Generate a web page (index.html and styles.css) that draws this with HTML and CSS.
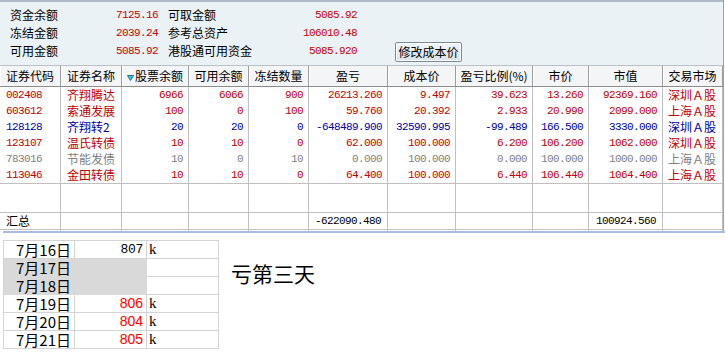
FILE: index.html
```html
<!DOCTYPE html>
<html lang="zh-CN">
<head>
<meta charset="utf-8">
<title>持仓</title>
<link rel="stylesheet" href="styles.css">
</head>
<body>
<div class="app">
  <div class="panel">
    <div class="summary">
      <span class="lbl">资金余额</span><span class="val">7125.16</span><span class="lbl2">可取金额</span><span class="val2">5085.92</span>
      <span class="lbl">冻结金额</span><span class="val">2039.24</span><span class="lbl2">参考总资产</span><span class="val2">106010.48</span>
      <span class="lbl">可用金额</span><span class="val">5085.92</span><span class="lbl2">港股通可用资金</span><span class="val2">5085.920</span><button class="btn">修改成本价</button>
    </div>
  </div>
  <div class="tbl">
    <div class="row head">
      <div class="c">证券代码</div>
      <div class="c">证券名称</div>
      <div class="c"><svg class="sort" width="7" height="6" viewBox="0 0 7 6"><polygon points="0.5,0.5 6.5,0.5 3.5,5.5" fill="#34C6DA" stroke="#167C8C" stroke-width="1"/></svg>股票余额</div>
      <div class="c">可用余额</div>
      <div class="c">冻结数量</div>
      <div class="c">盈亏</div>
      <div class="c">成本价</div>
      <div class="c">盈亏比例(%)</div>
      <div class="c">市价</div>
      <div class="c">市值</div>
      <div class="c">交易市场</div>
    </div>
    <div class="row data red">
      <div class="c n l">002408</div><div class="c t">齐翔腾达</div><div class="c n">6966</div><div class="c n">6066</div><div class="c n">900</div><div class="c n">26213.260</div><div class="c n">9.497</div><div class="c n">39.623</div><div class="c n">13.260</div><div class="c n">92369.160</div><div class="c t">深圳Ａ股</div>
    </div>
    <div class="row data red">
      <div class="c n l">603612</div><div class="c t">索通发展</div><div class="c n">100</div><div class="c n">0</div><div class="c n">100</div><div class="c n">59.760</div><div class="c n">20.392</div><div class="c n">2.933</div><div class="c n">20.990</div><div class="c n">2099.000</div><div class="c t">上海Ａ股</div>
    </div>
    <div class="row data blue">
      <div class="c n l">128128</div><div class="c t">齐翔转2</div><div class="c n">20</div><div class="c n">20</div><div class="c n">0</div><div class="c n">-648489.900</div><div class="c n">32590.995</div><div class="c n">-99.489</div><div class="c n">166.500</div><div class="c n">3330.000</div><div class="c t">深圳Ａ股</div>
    </div>
    <div class="row data red">
      <div class="c n l">123107</div><div class="c t">温氏转债</div><div class="c n">10</div><div class="c n">10</div><div class="c n">0</div><div class="c n">62.000</div><div class="c n">100.000</div><div class="c n">6.200</div><div class="c n">106.200</div><div class="c n">1062.000</div><div class="c t">深圳Ａ股</div>
    </div>
    <div class="row data gray">
      <div class="c n l">783016</div><div class="c t">节能发债</div><div class="c n">10</div><div class="c n">0</div><div class="c n">10</div><div class="c n">0.000</div><div class="c n">100.000</div><div class="c n">0.000</div><div class="c n">100.000</div><div class="c n">1000.000</div><div class="c t">上海Ａ股</div>
    </div>
    <div class="row data red last">
      <div class="c n l">113046</div><div class="c t">金田转债</div><div class="c n">10</div><div class="c n">10</div><div class="c n">0</div><div class="c n">64.400</div><div class="c n">100.000</div><div class="c n">6.440</div><div class="c n">106.440</div><div class="c n">1064.400</div><div class="c t">上海Ａ股</div>
    </div>
    <div class="row blank">
      <div class="c"></div><div class="c"></div><div class="c"></div><div class="c"></div><div class="c"></div><div class="c"></div><div class="c"></div><div class="c"></div><div class="c"></div><div class="c"></div><div class="c"></div>
    </div>
    <div class="row total">
      <div class="c t">汇总</div><div class="c"></div><div class="c"></div><div class="c"></div><div class="c"></div><div class="c n">-622090.480</div><div class="c"></div><div class="c"></div><div class="c"></div><div class="c n">100924.560</div><div class="c"></div>
    </div>
    <div class="row tail">
      <div class="c"></div><div class="c"></div><div class="c"></div><div class="c"></div><div class="c"></div><div class="c"></div><div class="c"></div><div class="c"></div><div class="c"></div><div class="c"></div><div class="c"></div>
    </div>
  </div>
</div>
<div class="sep"></div>
<div class="sheet">
  <div class="xl">
    <div class="x d">7月16日</div><div class="x v">807</div><div class="x k">k</div>
    <div class="x d g">7月17日</div><div class="x g"></div><div class="x"></div>
    <div class="x d g">7月18日</div><div class="x g"></div><div class="x"></div>
    <div class="x d">7月19日</div><div class="x v r">806</div><div class="x k">k</div>
    <div class="x d">7月20日</div><div class="x v r">804</div><div class="x k">k</div>
    <div class="x d">7月21日</div><div class="x v r">805</div><div class="x k">k</div>
  </div>
  <div class="note">亏第三天</div>
</div>
</body>
</html>
```
FILE: styles.css
```css
* { box-sizing: border-box; }
html, body { margin: 0; padding: 0; background: #ffffff; }
body {
  width: 725px;
  height: 359px;
  overflow: hidden;
  font-family: "Noto Sans CJK SC", "Noto Sans", sans-serif;
  font-size: 12px;
  color: #000;
}
.app {
  width: 724px;
  border-right: 1px solid #9aa4b0;
}
.panel {
  height: 65px;
  background: #eaf2f6;
  border-top: 2px solid #aeb8c6;
  padding: 4px 0 0 10px;
}
.summary {
  display: grid;
  grid-template-columns: 64px 84px 10px 90px 99px 105px;
  grid-auto-rows: 18px;
  align-items: center;
  line-height: 18px;
  white-space: nowrap;
}
.summary .lbl { grid-column: 1; }
.summary .val { grid-column: 2; }
.summary .lbl2 { grid-column: 4; }
.summary .val2 { grid-column: 5; }
.summary .val, .summary .val2 {
  text-align: right;
  font-family: "Liberation Mono", monospace;
  font-size: 11px;
  letter-spacing: -0.6px;
  color: #c80000;
}
.btn {
  grid-column: 6;
  grid-row: 3;
  margin: 0 0 -2px 38px;
  width: 67px;
  height: 20px;
  padding: 0;
  font-family: "Noto Sans CJK SC", sans-serif;
  font-size: 12px;
  line-height: 16px;
  color: #000;
  background: linear-gradient(#f2f6fa, #d9e2ea);
  border: 1px solid #7a8a9a;
  border-radius: 2px;
  box-shadow: inset 0 0 0 1px #ffffff;
}
.tbl { background: #fff; }
.row {
  display: grid;
  grid-template-columns: 61px 61px 67px 60px 60px 79px 68px 77px 56px 74px 60px;
}
.c {
  border-right: 1px solid #c0c0c0;
  white-space: nowrap;
  overflow: hidden;
  padding: 0 6px;
}
.head {
  height: 22px;
  background: #f3f5f7;
  border-top: 1px solid #b8c0c8;
  border-bottom: 1px solid #8c8c8c;
}
.head .c {
  height: 20px;
  line-height: 20px;
  text-align: center;
  padding: 0;
  border-right: 1px solid #9c9c9c;
  box-shadow: inset 1px 0 0 #ffffff;
}
.sort { margin-right: 1px; vertical-align: 0; }
.data .c { height: 16px; line-height: 16px; }
.c.n {
  text-align: right;
  font-family: "Liberation Mono", monospace;
  font-size: 11px;
  letter-spacing: -0.6px;
  padding-right: 5px;
}
.c.n.l { text-align: left; padding-left: 6px; padding-right: 0; }
.c.t { padding-left: 6px; }
.data .c.t:last-child { padding-left: 5px; }
.red { color: #c00000; }
.blue { color: #0000a0; }
.gray { color: #808080; }
.last { border-bottom: 1px solid #c0c0c0; }
.blank .c { height: 28px; }
.blank { border-bottom: 1px solid #c0c0c0; }
.total { border-bottom: 1px solid #c0c0c0; }
.total .c { height: 16px; line-height: 16px; }
.total .c.n { padding-right: 6px; }
.tail .c { height: 1px; }
.sep {
  height: 2px;
  margin-left: 3px;
  background: #a9bde4;
}
.sheet {
  display: flex;
  align-items: flex-start;
  padding: 7px 0 0 3px;
}
.xl {
  display: grid;
  grid-template-columns: 71px 72px 72px;
  grid-auto-rows: 18px;
  border-left: 1px solid #d4d4d4;
  border-top: 1px solid #d4d4d4;
}
.x {
  border-right: 1px solid #d4d4d4;
  border-bottom: 1px solid #d4d4d4;
  font-size: 15px;
  line-height: 17px;
  white-space: nowrap;
}
.x.d { text-align: right; padding-right: 3px; }
.x.v {
  text-align: right;
  padding-right: 3px;
  font-family: "Liberation Mono", monospace;
  font-size: 13px;
  letter-spacing: -0.3px;
}
.x.v.r {
  color: #ff0000;
  font-family: "Liberation Sans", sans-serif;
  font-size: 14px;
  letter-spacing: 0;
}
.x.k { font-family: "Liberation Serif", serif; padding-left: 2px; }
.x.g { background: #d9d9d9; border-color: #d9d9d9; }
.note {
  margin: 20px 0 0 12px;
  font-size: 21px;
  line-height: 26px;
}
```
